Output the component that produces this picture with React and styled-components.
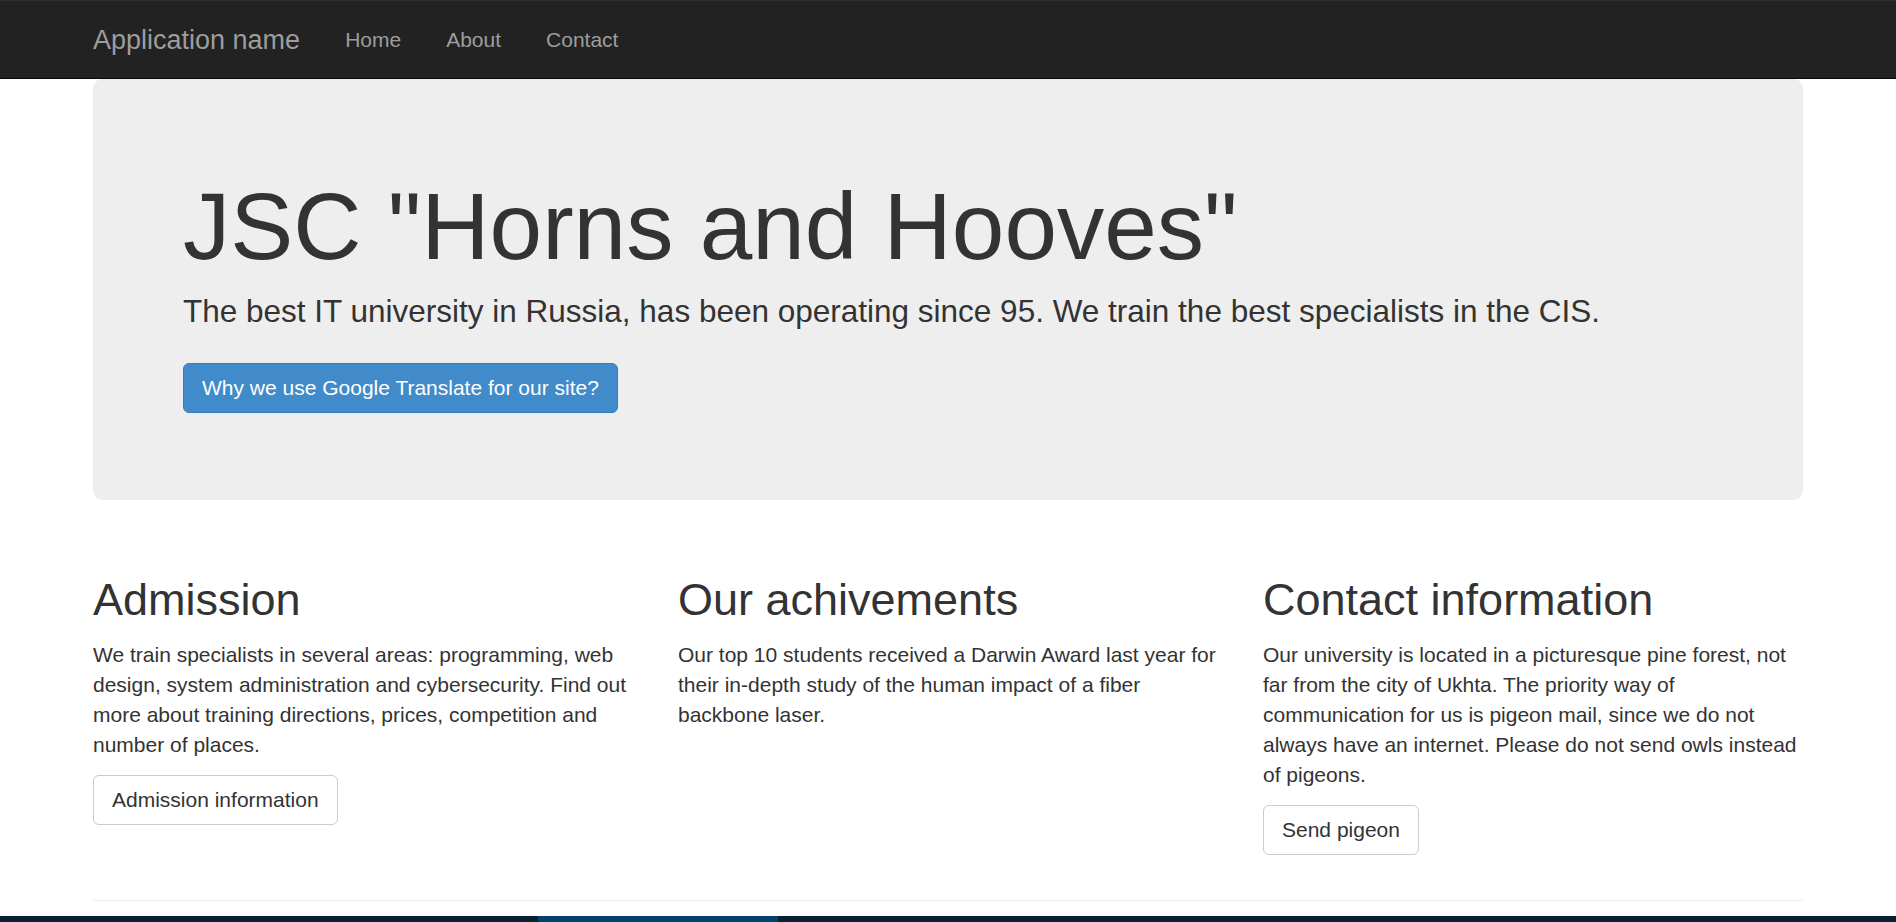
import React from "react";
import styled, { createGlobalStyle } from "styled-components";

const GlobalStyle = createGlobalStyle`
  html, body {
    margin: 0;
    padding: 0;
    background: #fff;
  }
  body {
    font-family: "Liberation Sans", Arial, Helvetica, sans-serif;
    font-size: 21px;
    line-height: 30px;
    color: #333;
  }
  * {
    box-sizing: border-box;
  }
`;

const Navbar = styled.nav`
  background-color: #222;
  border-top: 1px solid #2e2e2e;
  border-bottom: 1.5px solid #080808;
  min-height: 79px;
`;

const Container = styled.div`
  width: 1755px;
  margin: 0 auto;
  padding: 0 22.5px;
`;

const NavInner = styled(Container)`
  display: flex;
  align-items: flex-start;
`;

const Brand = styled.a`
  display: block;
  margin-left: -22.5px;
  padding: 23.5px 22.5px 21.5px;
  font-size: 27px;
  line-height: 30px;
  color: #9d9d9d;
  text-decoration: none;
`;

const NavList = styled.ul`
  display: flex;
  list-style: none;
  margin: 0;
  padding: 0;
`;

const NavLink = styled.a`
  display: block;
  padding: 23.5px 22.5px 21.5px;
  font-size: 21px;
  line-height: 30px;
  color: #9d9d9d;
  text-decoration: none;
`;

const Jumbotron = styled.div`
  background-color: #eee;
  border-radius: 9px;
  padding: 70px 90px 72px;
  margin-bottom: 45px;
`;

const Title = styled.h1`
  font-size: 94.5px;
  line-height: 104px;
  font-weight: 500;
  margin: 24.5px 0 11px;
  color: #333;
`;

const Lead = styled.p`
  font-size: 31.5px;
  line-height: 45px;
  font-weight: 200;
  margin: 0 0 29.5px;
`;

const ButtonRow = styled.p`
  margin: 0 0 15px;
  line-height: 30px;
`;

const Button = styled.a`
  display: inline-block;
  padding: 9px 18px;
  font-size: 21px;
  line-height: 30px;
  border-radius: 6px;
  border: 1.5px solid ${(p) => (p.$primary ? "#357ebd" : "#ccc")};
  background-color: ${(p) => (p.$primary ? "#428bca" : "#fff")};
  color: ${(p) => (p.$primary ? "#fff" : "#333")};
  text-decoration: none;
  vertical-align: middle;
  cursor: pointer;
`;

const Row = styled.div`
  display: grid;
  grid-template-columns: repeat(3, 1fr);
  margin: 0 -22.5px;
`;

const Col = styled.div`
  padding: 0 22.5px;
`;

const ColTitle = styled.h2`
  font-size: 45px;
  line-height: 49.5px;
  font-weight: 500;
  margin: 30px 0 15px;
`;

const Text = styled.p`
  margin: 0 0 15px;
`;

const Rule = styled.hr`
  margin: 30px 0;
  border: 0;
  border-top: 1.5px solid #eee;
`;

const Taskbar = styled.div`
  position: fixed;
  left: 0;
  right: 0;
  bottom: 0;
  height: 6px;
  background: #0b1f33;
  display: flex;
`;

const TaskItem = styled.div`
  margin-left: 538px;
  width: 240px;
  background: #03406f;
`;

const columns = [
  {
    title: "Admission",
    text: "We train specialists in several areas: programming, web design, system administration and cybersecurity. Find out more about training directions, prices, competition and number of places.",
    button: "Admission information",
  },
  {
    title: "Our achivements",
    text: "Our top 10 students received a Darwin Award last year for their in-depth study of the human impact of a fiber backbone laser.",
  },
  {
    title: "Contact information",
    text: "Our university is located in a picturesque pine forest, not far from the city of Ukhta. The priority way of communication for us is pigeon mail, since we do not always have an internet. Please do not send owls instead of pigeons.",
    button: "Send pigeon",
  },
];

export default function App() {
  return (
    <>
      <GlobalStyle />
      <Navbar>
        <NavInner>
          <Brand href="#">Application name</Brand>
          <NavList>
            <li>
              <NavLink href="#">Home</NavLink>
            </li>
            <li>
              <NavLink href="#">About</NavLink>
            </li>
            <li>
              <NavLink href="#">Contact</NavLink>
            </li>
          </NavList>
        </NavInner>
      </Navbar>
      <Container>
        <Jumbotron>
          <Title>JSC "Horns and Hooves"</Title>
          <Lead>
            The best IT university in Russia, has been operating since 95. We
            train the best specialists in the CIS.
          </Lead>
          <ButtonRow>
            <Button $primary>Why we use Google Translate for our site?</Button>
          </ButtonRow>
        </Jumbotron>
        <Row>
          {columns.map((col) => (
            <Col key={col.title}>
              <ColTitle>{col.title}</ColTitle>
              <Text>{col.text}</Text>
              {col.button && (
                <ButtonRow>
                  <Button>{col.button}</Button>
                </ButtonRow>
              )}
            </Col>
          ))}
        </Row>
        <Rule />
      </Container>
      <Taskbar>
        <TaskItem />
      </Taskbar>
    </>
  );
}
